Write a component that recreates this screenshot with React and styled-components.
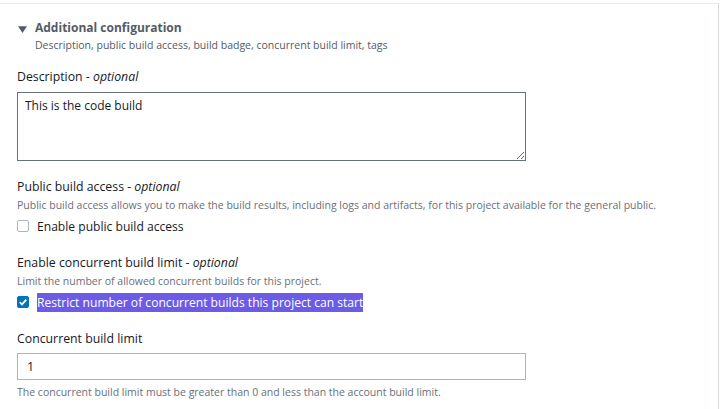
import styled, { createGlobalStyle } from "styled-components";

const GlobalStyle = createGlobalStyle`
  html, body {
    margin: 0;
    padding: 0;
    background: #ffffff;
  }
  body {
    padding-top: 3px;
    font-family: "Open Sans", "Liberation Sans", sans-serif;
    color: #16191f;
  }
`;

const App = () => {
  return (
    <>
      <GlobalStyle />
      <Panel>
        <Header>
          <Caret viewBox="0 0 8 6">
            <path d="M0 0 L8 0 L4 6 Z" fill="#545b64" />
          </Caret>
          <HeaderText>
            <Title>Additional configuration</Title>
            <Subtitle>
              Description, public build access, build badge, concurrent build limit, tags
            </Subtitle>
          </HeaderText>
        </Header>

        <Field $top={15}>
          <Label>
            Description - <em>optional</em>
          </Label>
          <TextArea defaultValue="This is the code build" />
        </Field>

        <Field $top={17}>
          <Label>
            Public build access - <em>optional</em>
          </Label>
          <Hint>
            Public build access allows you to make the build results, including logs and
            artifacts, for this project available for the general public.
          </Hint>
          <CheckRow>
            <Box />
            <CheckText>Enable public build access</CheckText>
          </CheckRow>
        </Field>

        <Field $top={18}>
          <Label>
            Enable concurrent build limit - <em>optional</em>
          </Label>
          <Hint>Limit the number of allowed concurrent builds for this project.</Hint>
          <CheckRow>
            <Box $checked>
              <svg width="10" height="10" viewBox="0 0 10 10">
                <path
                  d="M1.8 5.2 L4 7.4 L8.3 2.6"
                  fill="none"
                  stroke="#ffffff"
                  strokeWidth="1.8"
                />
              </svg>
            </Box>
            <CheckText $selected>Restrict number of concurrent builds this project can start</CheckText>
          </CheckRow>
        </Field>

        <Field $top={18}>
          <Label>Concurrent build limit</Label>
          <Input defaultValue="1" />
          <Help>
            The concurrent build limit must be greater than 0 and less than the account build limit.
          </Help>
        </Field>
      </Panel>
    </>
  );
};

const Panel = styled.div`
  box-sizing: border-box;
  width: 719px;
  height: 406px;
  border-top: 1px solid #eaeded;
  border-right: 1px solid #d5dbdb;
  padding: 0 0 0 17px;
  display: flex;
  flex-direction: column;
`;

const Header = styled.div`
  display: flex;
  align-items: flex-start;
  gap: 8px;
  padding-top: 15px;
`;

const Caret = styled.svg`
  width: 9px;
  height: 7px;
  margin-top: 7px;
  margin-left: 1px;
`;

const HeaderText = styled.div`
  display: flex;
  flex-direction: column;
`;

const Title = styled.div`
  font-size: 12px;
  font-weight: 700;
  line-height: 18px;
  color: #545b64;
`;

const Subtitle = styled.div`
  font-size: 10.5px;
  line-height: 16px;
  color: #545b64;
`;

const Field = styled.div`
  display: flex;
  flex-direction: column;
  margin-top: ${(p) => p.$top}px;
`;

const Label = styled.div`
  font-size: 12.3px;
  line-height: 18px;
  color: #16191f;

  em {
    font-style: italic;
  }
`;

const Hint = styled.div`
  font-size: 10.5px;
  line-height: 15px;
  margin-top: 2px;
  color: #687078;
`;

const TextArea = styled.textarea`
  box-sizing: border-box;
  width: 509px;
  height: 69px;
  margin-top: 6px;
  padding: 4px 7px;
  border: 1px solid #687078;
  border-radius: 0;
  font-family: "Open Sans", "Liberation Sans", sans-serif;
  font-size: 12px;
  line-height: 18px;
  color: #16191f;
  resize: vertical;
  outline: none;
`;

const CheckRow = styled.label`
  display: flex;
  align-items: center;
  gap: 8px;
  margin-top: 3px;
  height: 20px;
`;

const Box = styled.span`
  box-sizing: border-box;
  width: 12px;
  height: 12px;
  border-radius: 2px;
  border: 1px solid ${(p) => (p.$checked ? "#0073bb" : "#aab7b8")};
  background: ${(p) => (p.$checked ? "#0073bb" : "#ffffff")};
  display: flex;
  align-items: center;
  justify-content: center;
`;

const CheckText = styled.span`
  font-size: 12.1px;
  line-height: 19px;
  color: ${(p) => (p.$selected ? "#ffffff" : "#16191f")};
  background: ${(p) => (p.$selected ? "#6b5be6" : "transparent")};
`;

const Input = styled.input`
  box-sizing: border-box;
  width: 509px;
  height: 27px;
  margin-top: 5px;
  padding: 0 9px;
  border: 1px solid #aab7b8;
  font-family: "Open Sans", "Liberation Sans", sans-serif;
  font-size: 12.5px;
  color: #16191f;
  outline: none;
`;

const Help = styled.div`
  font-size: 10.5px;
  line-height: 16px;
  margin-top: 4px;
  color: #687078;
`;

export default App;
